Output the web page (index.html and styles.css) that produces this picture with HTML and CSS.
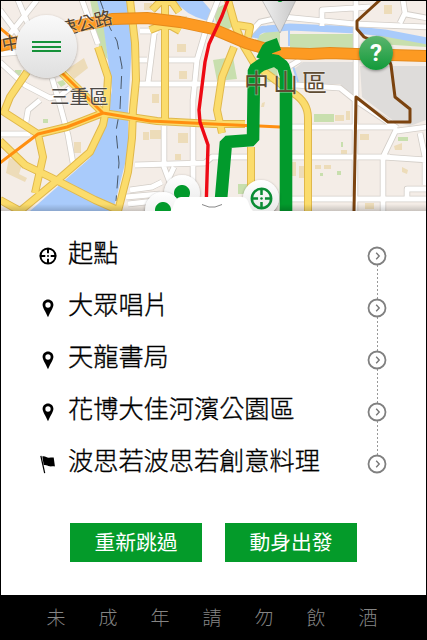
FILE: index.html
```
<!DOCTYPE html>
<html lang="zh-Hant">
<head>
    <meta charset="UTF-8">
    <meta name="viewport" content="width=device-width, initial-scale=1.0">
    <title>路線</title>
    <link rel="stylesheet" href="styles.css">
</head>
<body>
    <svg class="symbols" width="0" height="0">
        <symbol id="target" viewBox="0 0 20 20">
            <circle cx="10" cy="10" r="8.4" fill="none" stroke="currentColor" stroke-width="2.2"/>
            <path d="M10 1v6M10 13v6M1 10h6M13 10h6" stroke="currentColor" stroke-width="2.2"/>
            <circle cx="10" cy="10" r="1.1" fill="currentColor"/>
        </symbol>
        <symbol id="pin" viewBox="0 0 12 20">
            <path fill="currentColor" fill-rule="evenodd" d="M6 .5C2.8.5.3 2.900.3 6c0 3.500 3.400 7.500 5.700 13.300C8.300 13.500 11.700 9.500 11.700 6 11.700 2.900 9.200.5 6 .5zM6 3.500a2.800 2.800 0 1 1 0 5.600 2.800 2.800 0 0 1 0-5.600z"/>
        </symbol>
        <symbol id="flag" viewBox="0 0 18 20">
            <path d="M1.500 1L5.500 19" stroke="currentColor" stroke-width="1.300"/>
            <path fill="currentColor" d="M3 1.500c3 -1 4.500 1.500 7 1.300 2-.2 3.500-.4 5-.2l1.300 9.400c-2-.7-3.600.3-5.600-.1-2.400-.5-3.500-2-6.200-1.300z"/>
        </symbol>
        <symbol id="go" viewBox="0 0 20 20">
            <circle cx="10" cy="10" r="8.500" fill="#fff" stroke="#808080" stroke-width="1.800"/>
            <path d="M9.200 6.800l3 3.200-3 3.200" fill="none" stroke="#777" stroke-width="1.400"/>
        </symbol>
    </svg>

    <div class="app">
        <div class="map">
            <svg class="map-canvas" viewBox="0 0 427 211">
                <defs>
                    <linearGradient id="shade" x1="0" y1="0" x2="0" y2="1">
                        <stop offset="0" stop-color="#000" stop-opacity="0"/>
                        <stop offset="1" stop-color="#000" stop-opacity=".18"/>
                    </linearGradient>
                    <linearGradient id="cone" x1="0" y1="0" x2="1" y2="0">
                        <stop offset="0" stop-color="#f0f0f0"/>
                        <stop offset="1" stop-color="#c8c8c8"/>
                    </linearGradient>
                    <path id="lanes" d="M37 0L10 34M18 0L38 48M0 10L24 42M0 54L20 52M0 62L25 85 50 98 60 96 70 88M40 100L28 110 26 122M0 134H30M52 78L60 105 68 135 73 163M82 0L98 44M140 31h18M155 27L148 83M139 60h8M138 84H250M167 60h31M218 0L205 33 197 60 193 100V197M164 126V167L170 183M174 167L168 180M135 165L205 163 212 157H250M130 190L152 187 162 182M126 197L160 194M128 204L155 201M250 33L260 22 283 17 355 24 427 27M322 26V10L370 7M403 0L405 13 400 23M405 14L427 18M356 0V27M356 27V98M295 85L340 88 355 100 397 128M290 127H395M290 157H390M397 128L383 157V211M397 131L427 127M383 157L427 160M420 133L425 157V185M290 199H427M407 199V189H427M355 97V211M290 66L300 60"/>
                    <path id="roads" d="M130 0L135 43 136 80 133 110 132 138 128 172 118 211M98 47L108 77 106 110 103 125 90 152 60 178 20 211M27 72L10 97 4 112 38 134 43 157 35 193M0 141L25 165 50 177 95 200 120 211M0 200L20 211M62 73L103 113M38 134L67 127 103 113 157 121 213 124 245 124M165 0V122M228 0L235 25 243 45 255 65 293 93Q308 102 308 118V211M234 47L222 77 217 110 222 133M251 147V200M152 10L160 2 172 2 179 12M150 30L160 26 171 26 180 31M237 25L250 27 248 37"/>
                </defs>
                <rect width="427" height="211" fill="#f4ede7"/>

                <!-- 灰色區塊 -->
                <path class="grey" d="M303 62H353V95L340 84H298L293 70zM360 66H426V120L410 126 395 122 362 97z"/>
                <!-- 公園 -->
                <path class="park" d="M90 0h12l6 60-8-10zM213 10l14-7 8 22-16 10zM213 60l20-3 4 22-20 2zM290 34H357V48L310 49 290 50zM258 36L266 32 280 31V50L256 48zM262 68l15-4 1 18h-12zM375 33l51 10v4l-48-3zM314 114h20v8h-20zM238 184h12v10h-12zM15 70l7 0-2 5-6 0zM57 82l6-2 3 4-5 3zM43 119h5v4h-5zM398 137h10v4h-10zM341 142h2v5h-2zM337 171h4v4h-4zM320 173h3v3h-3z"/>
                <!-- 建物 -->
                <path class="house" d="M66 70l18-12 4 10-14 11zM9 158l14 4-4 12 8 4-2 4-19-9zM74 142h7v11h-7zM143 132h6v8h-6zM150 130h11v9h-11zM177 44h9v8h-9zM179 71h8v8h-8zM152 94h7v9h-7zM178 133h10v10h-10zM175 154h6v6h-6zM292 162h4v14h-4zM299 166h5v12h-5zM315 165h6v4h-6zM324 165h7v4h-7zM335 115h9v6h-9zM346 111h4v9h-4zM360 134h9v6h-9zM341 150h6v4h-6zM384 5h8v9h-8zM394 146l8-3v7h-7zM402 167l6 3-1 4-5-2zM365 203h9v6h-9zM262 103l3-1-1 5h-3zM144 3h8v7h-8zM181 16h6v8h-6z"/>
                <!-- 河 -->
                <path class="water" d="M97 0H129L132 43 128 110 128 152 113 211H30L90 158 107 115 112 90 104 30z"/>
                <path class="water" d="M172 0h30l12 14v8q-22-4-32-14z"/>
                <path class="canal" d="M255 38Q256 29 267 29L290 27 357 30 385 33 427 41"/>
                <path class="stream" d="M289 28v18M293 66l5 16"/>
                <path class="ferry" d="M100 0l10 28 7 13 5 26-2 42-4 22 3 32-3 38"/>

                <!-- 小路、黃色幹道 -->
                <use href="#lanes" class="lane-edge"/>
                <use href="#lanes" class="lane"/>
                <use href="#roads" class="road-edge"/>
                <use href="#roads" class="road"/>

                <!-- 橘色快速道路 -->
                <path class="minor" d="M0 28l18 15M62 73L103 113M0 163L38 134 67 127 103 113 150 121 213 124 280 127"/>
                <path class="highway-edge" d="M0 46L30 39 73 27 113 19 147 18 180 22 213 29 246 43 280 53 310 54 330 53 356 54 427 56"/>
                <path class="highway" d="M0 46L30 39 73 27 113 19 147 18 180 22 213 29 246 43 280 53 310 54 330 53 356 54 427 56"/>
                <path class="metro-red" d="M228 0L222 16 209 44 205 62 199 110 200 122 208 145 206 211"/>
                <path class="metro-brown" d="M380 0L357 21V29L364 37 384 46 391 65 395 97 410 109V122L388 122 356 97 354 211"/>

                <text class="place-small" transform="translate(3 51) rotate(-10)">中</text>
                <text class="place-small" transform="translate(61 36) rotate(-14)">速公路</text>
                <text class="place" x="50" y="104">三重區</text>
                <path class="route" d="M279 44L268 48 262 60M220.500 205L226 142 253 140 254 70 261 65 275 60 283 66 286 76V211"/>
                <text class="place-big" x="244" y="92">中山區</text>

                <path d="M262 0H296L280 33z" fill="url(#cone)" stroke="#999" stroke-width=".5"/>
                <circle cx="280" cy="-1" r="3" fill="#029a2c"/>
                <rect y="204" width="427" height="7" fill="url(#shade)"/>
            </svg>

            <div class="marker marker-one"></div>
            <div class="marker marker-two"></div>
            <div class="marker marker-start"><svg><use href="#target"/></svg></div>
            <div class="menu-btn"><i></i><i></i><i></i></div>
            <div class="help-btn">?</div>
            <svg class="handle" viewBox="0 0 86 15">
                <path d="M0 15Q3 14 5 7 7 0 12 0H73Q78 0 80 7 82 14 86 15z" fill="#fff"/>
                <path d="M33 7.500L40 10H46L53 7.500" fill="none" stroke="#888" stroke-width="1"/>
            </svg>
        </div>

        <div class="sheet">
            <ul class="stops">
                <li><svg class="icon target"><use href="#target"/></svg><span>起點</span><svg class="go"><use href="#go"/></svg></li>
                <li><svg class="icon pin"><use href="#pin"/></svg><span>大眾唱片</span><svg class="go"><use href="#go"/></svg></li>
                <li><svg class="icon pin"><use href="#pin"/></svg><span>天龍書局</span><svg class="go"><use href="#go"/></svg></li>
                <li><svg class="icon pin"><use href="#pin"/></svg><span>花博大佳河濱公園區</span><svg class="go"><use href="#go"/></svg></li>
                <li><svg class="icon flag"><use href="#flag"/></svg><span>波思若波思若創意料理</span><svg class="go"><use href="#go"/></svg></li>
            </ul>
            <div class="actions">
                <a href="#">重新跳過</a>
                <a href="#">動身出發</a>
            </div>
        </div>

        <div class="footer">
            <span>未</span><span>成</span><span>年</span><span>請</span><span>勿</span><span>飲</span><span>酒</span>
        </div>
    </div>
</body>
</html>
```
FILE: styles.css
```
*{
    box-sizing: border-box;
}
body{
    margin: 0;
    background: #000;
    font-family: "Noto Sans CJK TC", "Noto Sans CJK JP", sans-serif;
}
.symbols{
    display: none;
}
.app{
    width: 427px;
    height: 640px;
    border: 1px solid #000;
    border-bottom: 0;
    display: flex;
    flex-direction: column;
    overflow: hidden;
}

/* 地圖 */
.map{
    position: relative;
    height: 210px;
    overflow: hidden;
}
.map-canvas{
    display: block;
    width: 427px;
    height: 211px;
    margin: -1px 0 0 -1px;
}
.map-canvas path{
    stroke-linejoin: round;
}
.grey{
    fill: #dedcda;
}
.park{
    fill: #c8dfae;
}
.house{
    fill: #eddcb9;
}
.water{
    fill: #a9cbfb;
}
.canal{
    fill: none;
    stroke: #a9cbfb;
    stroke-width: 7;
}
.stream{
    fill: none;
    stroke: #a9cbfb;
    stroke-width: 2;
}
.ferry{
    fill: none;
    stroke: #4b5968;
    stroke-width: 1;
    stroke-dasharray: 13 7;
}
.lane-edge{
    fill: none;
    stroke: #d3cec8;
    stroke-width: 6.4;
}
.lane{
    fill: none;
    stroke: #fff;
    stroke-width: 4.8;
}
.road-edge{
    fill: none;
    stroke: #e0b84c;
    stroke-width: 8;
}
.road{
    fill: none;
    stroke: #fbdc6c;
    stroke-width: 6;
}
.minor{
    fill: none;
    stroke: #ff8f10;
    stroke-width: 3;
}
.highway-edge{
    fill: none;
    stroke: #e58a1b;
    stroke-width: 12;
}
.highway{
    fill: none;
    stroke: #fd9a22;
    stroke-width: 10;
}
.metro-red{
    fill: none;
    stroke: #ee0a14;
    stroke-width: 3.4;
}
.metro-brown{
    fill: none;
    stroke: #7b430f;
    stroke-width: 3;
}
.map-canvas .route{
    fill: none;
    stroke: #029a2c;
    stroke-width: 12.6;
    stroke-linejoin: bevel;
}
.place-small,
.place,
.place-big{
    fill: #54432f;
    stroke: rgba(255, 255, 255, 0.4);
    stroke-width: 1.4;
    paint-order: stroke;
}
.place-small{
    font-size: 18px;
}
.place{
    font-size: 19.5px;
    fill: #4c4a48;
}
.place-big{
    font-size: 25px;
    letter-spacing: 4px;
    fill: #5f4c33;
}

/* 地圖上的按鈕與標記 */
.menu-btn{
    position: absolute;
    left: 15px;
    top: 14px;
    width: 61px;
    height: 63px;
    border-radius: 50%;
    background: linear-gradient(#fafafa, #dfdfdf);
    box-shadow: 0 1px 3px rgba(0, 0, 0, 0.3);
    display: flex;
    flex-direction: column;
    align-items: center;
    justify-content: center;
    gap: 2.5px;
}
.menu-btn i{
    width: 29px;
    height: 2px;
    background: #16923a;
}
.help-btn{
    position: absolute;
    left: 358px;
    top: 35px;
    width: 34px;
    height: 34px;
    border-radius: 50%;
    background: linear-gradient(#5bb56d, #129a3a);
    box-shadow: 0 1px 3px rgba(0, 0, 0, 0.4);
    color: #fff;
    font: bold 24px/34px Roboto, sans-serif;
    text-align: center;
}
.marker{
    position: absolute;
    width: 36px;
    height: 36px;
    border-radius: 50%;
    background: radial-gradient(#029a2c 7.5px, transparent 8.5px), linear-gradient(#fff, #e6e6e6);
    box-shadow: 0 1px 3px rgba(0, 0, 0, 0.4);
}
.marker-one{
    left: 163px;
    top: 174px;
}
.marker-two{
    left: 144px;
    top: 191px;
}
.marker-start{
    left: 242px;
    top: 179px;
    background: linear-gradient(#fff, #e6e6e6);
    color: #0b8c35;
    display: flex;
    align-items: center;
    justify-content: center;
}
.marker-start svg{
    width: 23px;
    height: 23px;
}
.handle{
    position: absolute;
    left: 168px;
    top: 196px;
    width: 86px;
    height: 15px;
}

/* 站點列表 */
.sheet{
    height: 384px;
    background: #fff;
}
.stops{
    list-style: none;
    margin: 0;
    padding: 19px 39px 0 37px;
    background: repeating-linear-gradient(#999 0 2px, transparent 2px 4px) 376px 54px / 1px 190px no-repeat;
}
.stops li{
    height: 52px;
    display: flex;
    align-items: center;
    color: #000;
}
.stops span{
    flex: 1;
    margin-left: 10px;
    font-size: 25.2px;
    line-height: 40px;
    font-weight: 300;
    -webkit-text-stroke: 0.35px #000;
    white-space: nowrap;
    padding-bottom: 10px;
}
.icon{
    width: 20px;
    height: 18px;
}
.icon.pin,
.icon.flag{
    height: 19px;
    margin-top: 1px;
}
.go{
    width: 20px;
    height: 20px;
}
.actions{
    display: flex;
    gap: 23px;
    padding: 33px 0 0 69px;
}
.actions a{
    width: 132px;
    height: 39px;
    background: #049b2a;
    color: #fff;
    font-size: 20.8px;
    line-height: 36px;
    text-align: center;
    text-decoration: none;
}

/* 警語 */
.footer{
    flex: 1;
    display: flex;
    padding: 0 31px 0 29px;
    background: #000;
    color: #858585;
    font-size: 19px;
    line-height: 43px;
    font-weight: 300;
}
.footer span{
    width: 52px;
    flex: none;
    text-align: center;
}
```
